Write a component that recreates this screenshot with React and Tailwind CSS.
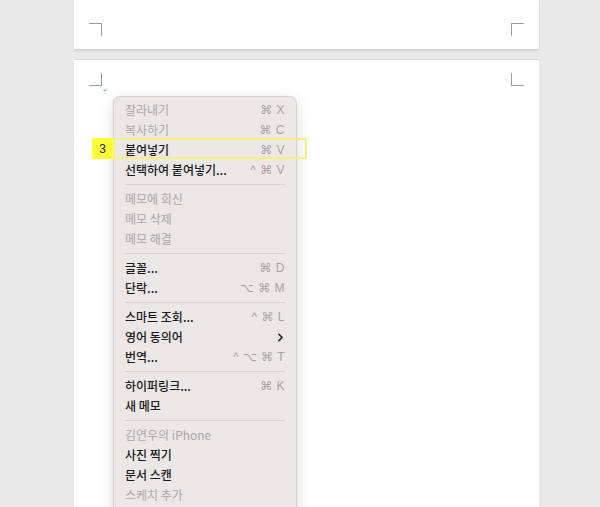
import { ChevronRight } from "lucide-react"

const items = [
  { label: "잘라내기", key: "⌘ X", off: true },
  { label: "복사하기", key: "⌘ C", off: true },
  { label: "붙여넣기", key: "⌘ V" },
  { label: "선택하여 붙여넣기...", key: "^ ⌘ V" },
  "sep",
  { label: "메모에 회신", off: true },
  { label: "메모 삭제", off: true },
  { label: "메모 해결", off: true },
  "sep",
  { label: "글꼴...", key: "⌘ D" },
  { label: "단락...", key: "⌥ ⌘ M" },
  "sep",
  { label: "스마트 조회...", key: "^ ⌘ L" },
  { label: "영어 동의어", sub: true },
  { label: "번역...", key: "^ ⌥ ⌘ T" },
  "sep",
  { label: "하이퍼링크...", key: "⌘ K" },
  { label: "새 메모" },
  "sep",
  { label: "김연우의 iPhone", off: true },
  { label: "사진 찍기" },
  { label: "문서 스캔" },
  { label: "스케치 추가", off: true },
]

const Corner = ({ className }) => (
  <div className={"w-[13px] h-[13px] border-[#9a9a9a] " + className}></div>
)

const App = () => {
  return (
    <div
      className="relative w-[600px] h-[507px] overflow-hidden bg-[#e8e8e8]"
      style={{ fontFamily: '"Noto Sans CJK KR", "Liberation Sans", sans-serif' }}
    >
      <div className="flex flex-col gap-[9px] pl-[74px]">
        <div className="w-[465px] h-[50px] bg-white border-b border-[#d2d2d2] shadow-[0_1px_2px_rgba(0,0,0,0.08)] flex items-start justify-between px-[15px] pt-[23px]">
          <Corner className="border-t-[1.5px] border-r-[1.5px]" />
          <Corner className="border-t-[1.5px] border-l-[1.5px]" />
        </div>
        <div className="w-[465px] h-[460px] bg-white border-t border-[#d8d8d8] px-[15px] pt-[13px]">
          <div className="flex justify-between">
            <Corner className="border-b-[1.5px] border-r-[1.5px]" />
            <Corner className="border-b-[1.5px] border-l-[1.5px]" />
          </div>
          <div className="pl-[14px] pt-[1px] text-[6px] leading-none text-[#6aa0d8]" style={{ fontFamily: '"DejaVu Sans", sans-serif' }}>↵</div>
        </div>
      </div>

      <div className="absolute left-[113px] top-[96px] w-[184px] h-[430px] rounded-[7px] bg-[#ebe7e7] border border-[#d3cfcf] shadow-[0_4px_14px_rgba(0,0,0,0.15)] pt-[3px] px-[11px]">
        {items.map((it, i) =>
          it === "sep" ? (
            <div key={i} className="h-[9px] flex items-center">
              <div className="w-full h-px bg-[#d6d2d2]"></div>
            </div>
          ) : (
            <div key={i} className="h-[20px] flex items-center justify-between text-[12px]">
              <span className={it.off ? "text-[#aaa6a6]" : "text-[#1a1a1a] font-medium"}>{it.label}</span>
              {it.key && (
                <span className="text-[12px] text-[#a6a2a2] tracking-[0.5px]" style={{ fontFamily: '"Liberation Sans", "DejaVu Sans", sans-serif' }}>
                  {it.key}
                </span>
              )}
              {it.sub && <ChevronRight size={13} strokeWidth={3} className="text-[#1f1f1f] -mr-[2px]" />}
            </div>
          )
        )}
      </div>

      <div className="absolute left-[92px] top-[138px] flex items-stretch h-[21px]">
        <div className="w-[21px] bg-[#fcfc3a] flex items-center justify-center text-[12px] text-[#1f1f1f]" style={{ fontFamily: '"Liberation Sans", sans-serif' }}>
          3
        </div>
        <div className="w-[194px] border-2 border-[#f4f07a]"></div>
      </div>
    </div>
  )
}

export default App
